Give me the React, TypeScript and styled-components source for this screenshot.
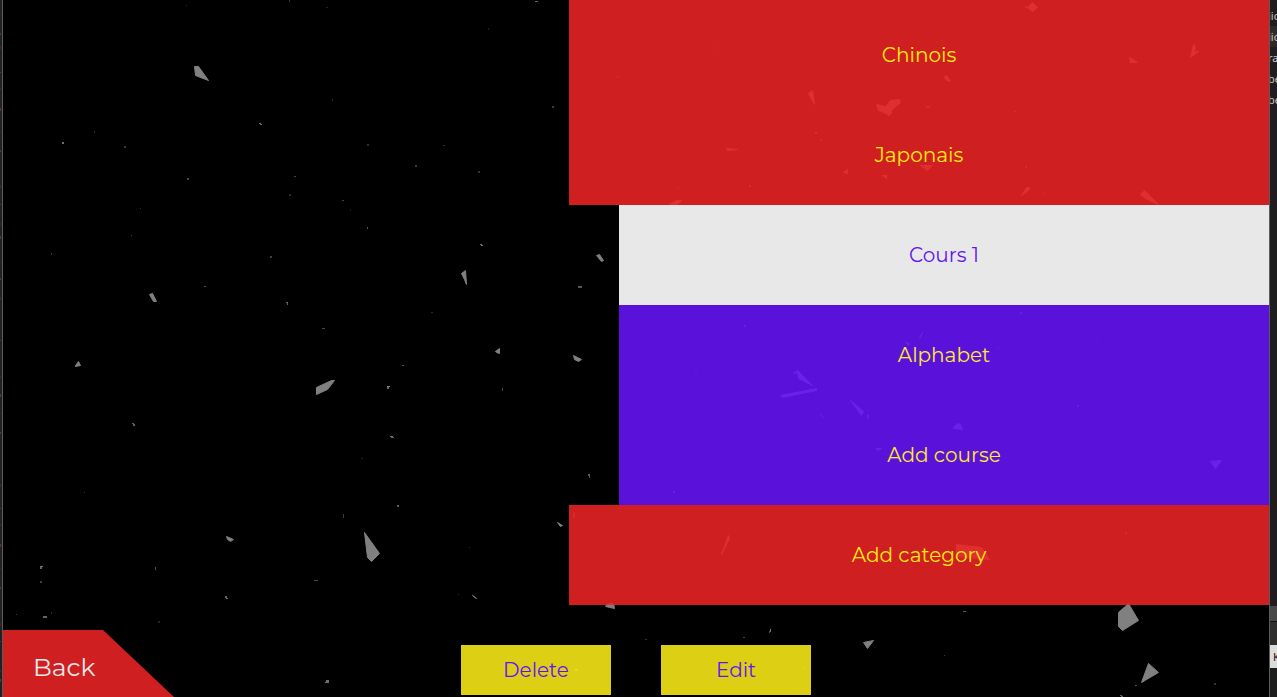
import React from "react";
import styled, { createGlobalStyle } from "styled-components";

const GlobalStyle = createGlobalStyle`
  * { box-sizing: border-box; }
  body { margin: 0; background: #1e1e1e; }
`;

const Desktop = styled.div`
  display: flex;
  height: 100vh;
  min-height: 690px;
  overflow: hidden;
  font-family: Montserrat, Inter, "Liberation Sans", sans-serif;
`;

const LeftSliver = styled.svg`
  flex: 0 0 2px;
  width: 2px;
  height: 100%;
  background: #212121;
`;

const Window = styled.main`
  position: relative;
  flex: 1;
  min-width: 0;
  display: flex;
  flex-direction: column;
  background: #000;
  border: solid #5c5c5c;
  border-width: 0 1px;
`;

const Debris = styled.svg`
  position: absolute;
  inset: 0;
  width: 100%;
  height: 100%;
`;

const List = styled.nav`
  position: relative;
  align-self: flex-end;
  width: 700px;
  max-width: 100%;
  display: flex;
  flex-direction: column;
`;

const SubList = styled.div`
  display: flex;
  flex-direction: column;
  margin-left: 50px;
`;

const tones = {
  red: { bg: "rgba(237, 35, 37, 0.88)", fg: "#ffeb14" },
  white: { bg: "rgba(255, 255, 255, 0.91)", fg: "#6313f3" },
  purple: { bg: "rgba(103, 20, 249, 0.88)", fg: "#ffeb2e" },
  yellow: { bg: "rgba(251, 236, 23, 0.88)", fg: "#6313f3" },
};

const Panel = styled.button<{ $tone: keyof typeof tones }>`
  border: 0;
  padding: 0;
  font: inherit;
  font-size: 20px;
  line-height: 24px;
  cursor: pointer;
  background: ${(p) => tones[p.$tone].bg};
  color: ${(p) => tones[p.$tone].fg};
`;

const Row = styled(Panel)`
  height: 100px;
`;

const PreviousRow = styled.div`
  height: 5px;
  background: ${tones.red.bg};
`;

const Footer = styled.footer`
  position: relative;
  flex: 1;
  display: grid;
  grid-template-columns: 1fr auto 1fr;
  align-items: end;
`;

const Back = styled.button`
  width: 171px;
  height: 67px;
  border: 0;
  padding: 6px 0 0 30px;
  font: inherit;
  font-size: 25px;
  line-height: 32px;
  text-align: left;
  color: #e8e8e8;
  background: ${tones.red.bg};
  cursor: pointer;
  clip-path: polygon(0 0, 100px 0, 100% 100%, 0 100%);
`;

const Actions = styled.div`
  display: flex;
  gap: 50px;
  padding-bottom: 2px;
`;

const Action = styled(Panel)`
  width: 150px;
  height: 50px;
`;

const RightSliver = styled.aside`
  flex: 0 0 7px;
  width: 7px;
  overflow: hidden;
  display: flex;
  flex-direction: column;
  background: #1e1e1e;
  color: #c8c8c8;
  font-family: "Noto Sans", sans-serif;
  font-size: 11px;
  line-height: 21px;
  white-space: nowrap;
`;

const FileName = styled.div<{ $active?: boolean }>`
  height: 21px;
  text-indent: -2px;
  background: ${(p) => (p.$active ? "#2b2b2b" : "transparent")};
`;

const Files = styled.div`
  flex: 1;
  padding-top: 5px;
`;

const StatusBand = styled.div`
  height: 16px;
  background: #484848;
  border-bottom: 1px solid #111;
`;

const StatusGap = styled.div`
  height: 23px;
  background: #2e2e2e;
`;

const Tip = styled.div`
  height: 23px;
  padding-left: 3px;
  margin-bottom: 29px;
  line-height: 24px;
  background: #dcdcdc;
  color: #2a0a20;
`;

const shards = [
  "194,66 198,66 208,80 195,75",
  "149,294 152,293 156,301 153,301",
  "461,273 465,270 466,284 464,279",
  "596,255 599,254 603,260 601,261",
  "495,351 499,348 499,353 496,352",
  "573,355 581,359 578,361 574,359",
  "316,387 331,380 334,380 327,389 316,394",
  "364,532 379,553 371,561 367,557",
  "226,536 233,539 230,541 227,539",
  "75,365 78,361 80,365 75,366",
  "557,522 562,525 560,526",
  "605,606 607,603 613,603 614,608",
  "472,595 476,598",
  "808,93 812,90 813,96 814,104",
  "876,104 885,106 890,100 899,99 900,102 891,110 891,113 888,115 886,113 878,110",
  "944,76 946,75 950,80 948,81 945,79",
  "726,148 737,149 727,150",
  "843,172 847,169 847,173",
  "920,165 932,165 927,170",
  "882,175 886,175 886,178",
  "669,204 676,200 681,200 677,204",
  "1027,7 1032,2 1037,7 1032,11",
  "1129,57 1137,62 1130,62",
  "1193,44 1195,46 1194,51 1198,51 1190,57",
  "1021,195 1026,187 1029,187 1029,189",
  "1140,194 1144,190 1158,204 1145,198",
  "793,373 797,370 812,385 798,378 797,372",
  "780,395 816,388 816,390 782,397",
  "850,400 863,411 861,415",
  "867,414 868,415 868,418 867,417",
  "820,414 823,417",
  "905,342 909,343 908,345",
  "919,338 922,332",
  "876,448 881,448 877,450",
  "953,427 957,423 960,424 962,429 953,428",
  "1210,461 1221,460 1215,468",
  "721,554 728,535 729,538",
  "573,517 574,512",
  "956,544 981,547 989,559 956,556",
  "1118,612 1128,603 1138,620 1122,630 1118,626",
  "863,642 873,640 867,648",
  "1148,663 1158,672 1141,682",
  "1120,695 1122,696",
  "575,669 577,669 576,670 575,670",
];

// x, y, width, height, grey level
const specks: [number, number, number, number, number][] = [
  [186, 5, 1, 1, 45], [289, 0, 1, 2, 60], [535, 1, 3, 1, 100], [488, 28, 1, 2, 30],
  [326, 7, 2, 1, 30], [259, 123, 2, 1, 110], [260, 124, 2, 1, 110], [62, 142, 2, 2, 110],
  [94, 131, 1, 2, 45], [124, 146, 2, 2, 55], [187, 178, 2, 2, 70], [294, 176, 2, 1, 70],
  [289, 194, 2, 2, 45], [140, 208, 1, 1, 50], [131, 235, 1, 1, 60], [51, 253, 1, 2, 55],
  [270, 256, 2, 2, 65], [204, 286, 2, 1, 80], [286, 302, 2, 1, 110], [287, 303, 1, 2, 95],
  [332, 99, 1, 2, 40], [552, 106, 2, 2, 60], [367, 144, 2, 2, 45], [443, 145, 2, 1, 50],
  [415, 165, 2, 2, 60], [478, 171, 2, 2, 50], [342, 200, 2, 1, 65], [350, 209, 1, 2, 25],
  [367, 227, 1, 2, 85], [480, 244, 2, 1, 115], [481, 245, 2, 1, 115], [578, 286, 4, 2, 85],
  [431, 312, 2, 1, 40], [322, 328, 3, 1, 70], [402, 365, 2, 1, 85], [387, 386, 3, 1, 125],
  [387, 387, 2, 2, 100], [502, 388, 1, 3, 75], [390, 436, 3, 1, 110], [391, 437, 3, 1, 110],
  [361, 458, 2, 1, 30], [588, 474, 2, 2, 90], [589, 476, 1, 2, 90], [397, 505, 2, 2, 90],
  [343, 514, 1, 4, 60], [469, 547, 1, 1, 40], [458, 594, 1, 1, 50], [314, 580, 4, 1, 70],
  [132, 423, 2, 1, 95], [133, 424, 2, 2, 95], [84, 492, 1, 1, 50], [40, 566, 3, 1, 115],
  [40, 567, 2, 2, 100], [40, 581, 2, 2, 60], [155, 567, 1, 3, 80], [225, 596, 2, 2, 100],
  [226, 598, 2, 1, 110], [43, 616, 4, 2, 100], [51, 612, 1, 2, 40], [16, 614, 1, 1, 60],
  [158, 621, 2, 2, 35], [326, 680, 3, 2, 110], [325, 682, 4, 1, 110], [714, 47, 1, 2, 80],
  [815, 132, 2, 2, 110], [820, 139, 2, 2, 90], [926, 106, 4, 2, 80], [617, 76, 2, 2, 60],
  [677, 187, 2, 1, 110], [749, 185, 2, 2, 90], [1014, 111, 2, 1, 90], [1025, 6, 2, 2, 100],
  [1025, 166, 2, 2, 90], [1043, 193, 2, 1, 100], [744, 325, 2, 2, 110], [695, 373, 2, 1, 110],
  [1020, 312, 2, 2, 110], [1077, 405, 2, 2, 100], [1097, 340, 1, 2, 60], [673, 491, 2, 2, 110],
  [997, 347, 2, 1, 90], [1125, 532, 2, 2, 90], [645, 639, 2, 1, 50], [743, 637, 2, 1, 65],
  [770, 629, 1, 3, 120], [769, 631, 1, 2, 80], [963, 611, 3, 1, 90], [944, 655, 1, 1, 55],
  [1135, 685, 2, 1, 90], [1214, 683, 2, 2, 50], [803, 668, 2, 1, 110],
];

const marks = [
  14, 33, 46, 72, 88, 108, 131, 150, 185, 204, 223, 236, 262, 278, 297, 340, 376, 394, 413, 432,
  484, 508, 524, 544, 568, 587, 623, 641, 670, 679,
];

const files = ["lic", "lic", "ra", "be", "be"];

export default function App() {
  return (
    <>
      <GlobalStyle />
      <Desktop>
        <LeftSliver aria-hidden="true">
          {marks.map((y, i) => (
            <rect key={y} x="0" y={y} width="1" height={(i % 3) + 1} fill={i % 2 ? "#6a3520" : "#54211c"} />
          ))}
        </LeftSliver>
        <Window>
          <Debris viewBox="3 0 1266 697" preserveAspectRatio="xMinYMin slice" aria-hidden="true">
            <g transform="translate(0.5 0.5)" fill="#808080" stroke="#808080" strokeWidth="1">
              {shards.map((points) => (
                <polygon key={points} points={points} />
              ))}
            </g>
            {specks.map(([x, y, w, h, g]) => (
              <rect key={`${x}-${y}`} x={x} y={y} width={w} height={h} fill={`rgb(${g},${g},${g})`} />
            ))}
          </Debris>
          <List aria-label="Categories">
            <PreviousRow />
            <Row $tone="red">Chinois</Row>
            <Row $tone="red">Japonais</Row>
            <SubList>
              <Row $tone="white">Cours 1</Row>
              <Row $tone="purple">Alphabet</Row>
              <Row $tone="purple">Add course</Row>
            </SubList>
            <Row $tone="red">Add category</Row>
          </List>
          <Footer>
            <Back>Back</Back>
            <Actions>
              <Action $tone="yellow">Delete</Action>
              <Action $tone="yellow">Edit</Action>
            </Actions>
          </Footer>
        </Window>
        <RightSliver>
          <Files>
            {files.map((name, i) => (
              <FileName key={i} $active={i === 1}>{name}</FileName>
            ))}
          </Files>
          <StatusBand />
          <StatusGap />
          <Tip>K</Tip>
        </RightSliver>
      </Desktop>
    </>
  );
}
